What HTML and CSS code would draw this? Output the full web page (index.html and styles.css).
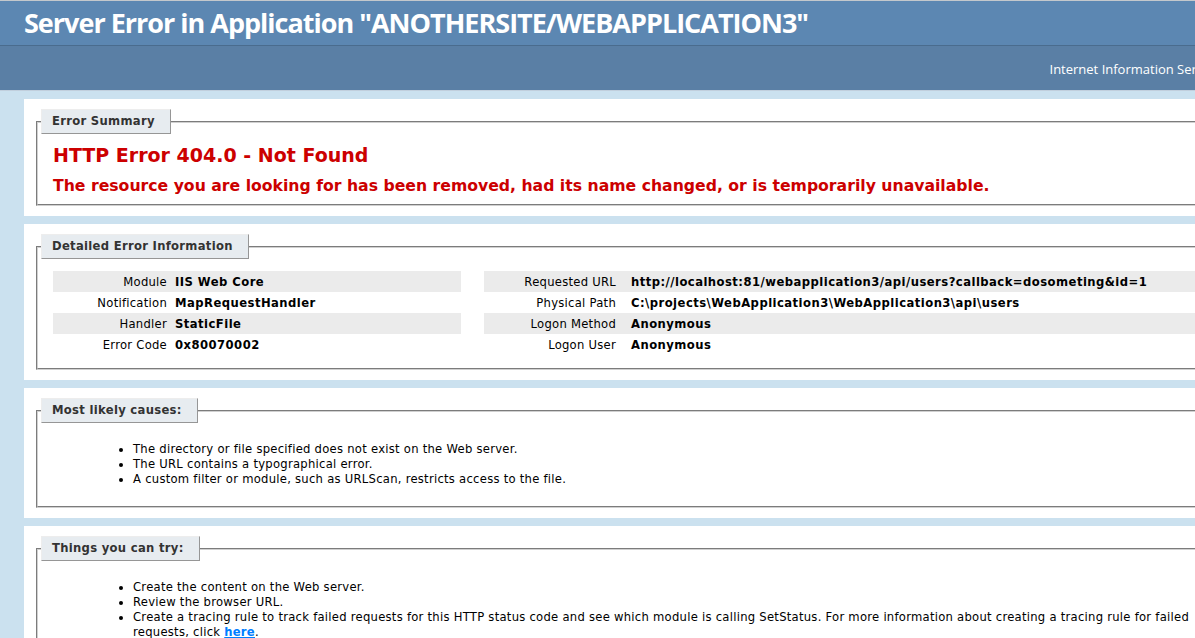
FILE: index.html
```html
<!DOCTYPE html>
<html lang="en">
<head>
<meta charset="utf-8">
<title>IIS Detailed Error - 404.0 - Not Found</title>
<link rel="stylesheet" href="styles.css">
</head>
<body>
<div class="header"><h1>Server Error in Application "ANOTHERSITE/WEBAPPLICATION3"</h1></div>
<div class="server-version"><p>Internet Information Services 7.5</p></div>
<div class="content">
  <div class="container">
    <div class="fieldset summary">
      <div class="legend">Error Summary</div>
      <h2>HTTP Error 404.0 - Not Found</h2>
      <h3>The resource you are looking for has been removed, had its name changed, or is temporarily unavailable.</h3>
    </div>
  </div>
  <div class="container">
    <div class="fieldset">
      <div class="legend">Detailed Error Information</div>
      <div class="details">
        <table class="details-left">
          <tr class="alt"><th>Module</th><td>IIS Web Core</td></tr>
          <tr><th>Notification</th><td>MapRequestHandler</td></tr>
          <tr class="alt"><th>Handler</th><td>StaticFile</td></tr>
          <tr><th>Error Code</th><td>0x80070002</td></tr>
        </table>
        <table class="details-right">
          <tr class="alt"><th>Requested URL</th><td>http://localhost:81/webapplication3/api/users?callback=dosometing&amp;id=1</td></tr>
          <tr><th>Physical Path</th><td>C:\projects\WebApplication3\WebApplication3\api\users</td></tr>
          <tr class="alt"><th>Logon Method</th><td>Anonymous</td></tr>
          <tr><th>Logon User</th><td>Anonymous</td></tr>
        </table>
      </div>
    </div>
  </div>
  <div class="container">
    <div class="fieldset">
      <div class="legend">Most likely causes:</div>
      <ul>
        <li>The directory or file specified does not exist on the Web server.</li>
        <li>The URL contains a typographical error.</li>
        <li>A custom filter or module, such as URLScan, restricts access to the file.</li>
      </ul>
    </div>
  </div>
  <div class="container">
    <div class="fieldset">
      <div class="legend">Things you can try:</div>
      <ul>
        <li>Create the content on the Web server.</li>
        <li>Review the browser URL.</li>
        <li>Create a tracing rule to track failed requests for this HTTP status code and see which module is calling SetStatus. For more information about creating a tracing rule for failed requests, click <a href="#">here</a>.</li>
      </ul>
    </div>
  </div>
</div>
</body>
</html>
```

FILE: styles.css
```css
html {
  overflow: hidden;
}

body {
  margin: 0;
  width: 1280px;
  font-family: "DejaVu Sans", sans-serif;
  font-size: 11.6px;
  line-height: 15px;
  letter-spacing: 0.26px;
  color: #000;
  background: #CBE1EF;
}

.header {
  border-top: 1px solid #c4c8cc;
  background: #5C87B2;
  padding: 6px 24px;
}

h1 {
  margin: 0;
  font-family: "Open Sans", sans-serif;
  font-size: 27px;
  line-height: 32px;
  font-weight: bold;
  letter-spacing: -1px;
  color: #fff;
  white-space: nowrap;
}

.server-version {
  border-top: 1px solid #4A6C8E;
  border-bottom: 1px solid #C1CFDD;
  background: #5A7FA5;
  padding: 11px 32px 8px 24px;
  text-align: right;
  color: #fff;
  font-family: "Open Sans", sans-serif;
  font-size: 13px;
  line-height: 15px;
  letter-spacing: 0;
}

.server-version p {
  margin: 5px 0;
}

.content {
  margin-left: 24px;
  padding-top: 8px;
}

.container {
  background: #fff;
  width: 1204px;
  padding: 10px;
  margin-bottom: 8px;
}

.fieldset {
  display: flex;
  flex-direction: column;
  margin: 12px 2px 0;
  border: 2px groove #d0d0d0;
  padding: 0 15px 10px;
}

.summary {
  padding-bottom: 9px;
}

.legend {
  align-self: flex-start;
  margin: -14px 0 8px -12px;
  padding: 4px 15px 4px 10px;
  border: 1px solid;
  border-color: #EDEDED #969696 #969696 #EDEDED;
  background: #E7ECF0;
  color: #333;
  font-weight: bold;
  letter-spacing: 0.3px;
  line-height: 15px;
}

h2 {
  margin: 0;
  font-size: 19px;
  line-height: 26px;
  letter-spacing: 0;
  color: #CC0000;
}

h3 {
  margin: 8px 0 0;
  font-size: 15.68px;
  line-height: 19px;
  letter-spacing: 0;
  color: #CC0000;
}

.details {
  display: flex;
  gap: 23px;
  align-items: flex-start;
}

table {
  border-collapse: collapse;
  margin: 4px 0 3px;
}

.details-left {
  width: 408px;
}

.details-right {
  width: 735px;
}

th,
td {
  padding: 4px 0 2px;
  vertical-align: top;
  text-align: left;
}

th {
  font-weight: normal;
  text-align: right;
  padding-right: 8px;
  width: 114px;
  white-space: nowrap;
}

.details-right th {
  width: 132px;
  padding-right: 15px;
}

td {
  font-weight: bold;
  letter-spacing: 0.46px;
  white-space: nowrap;
}

tr.alt {
  background: #EBEBEB;
}

ul {
  margin: 11px 0 9px 40px;
  padding-left: 40px;
}

a {
  color: #007EFF;
  font-weight: bold;
}
```
